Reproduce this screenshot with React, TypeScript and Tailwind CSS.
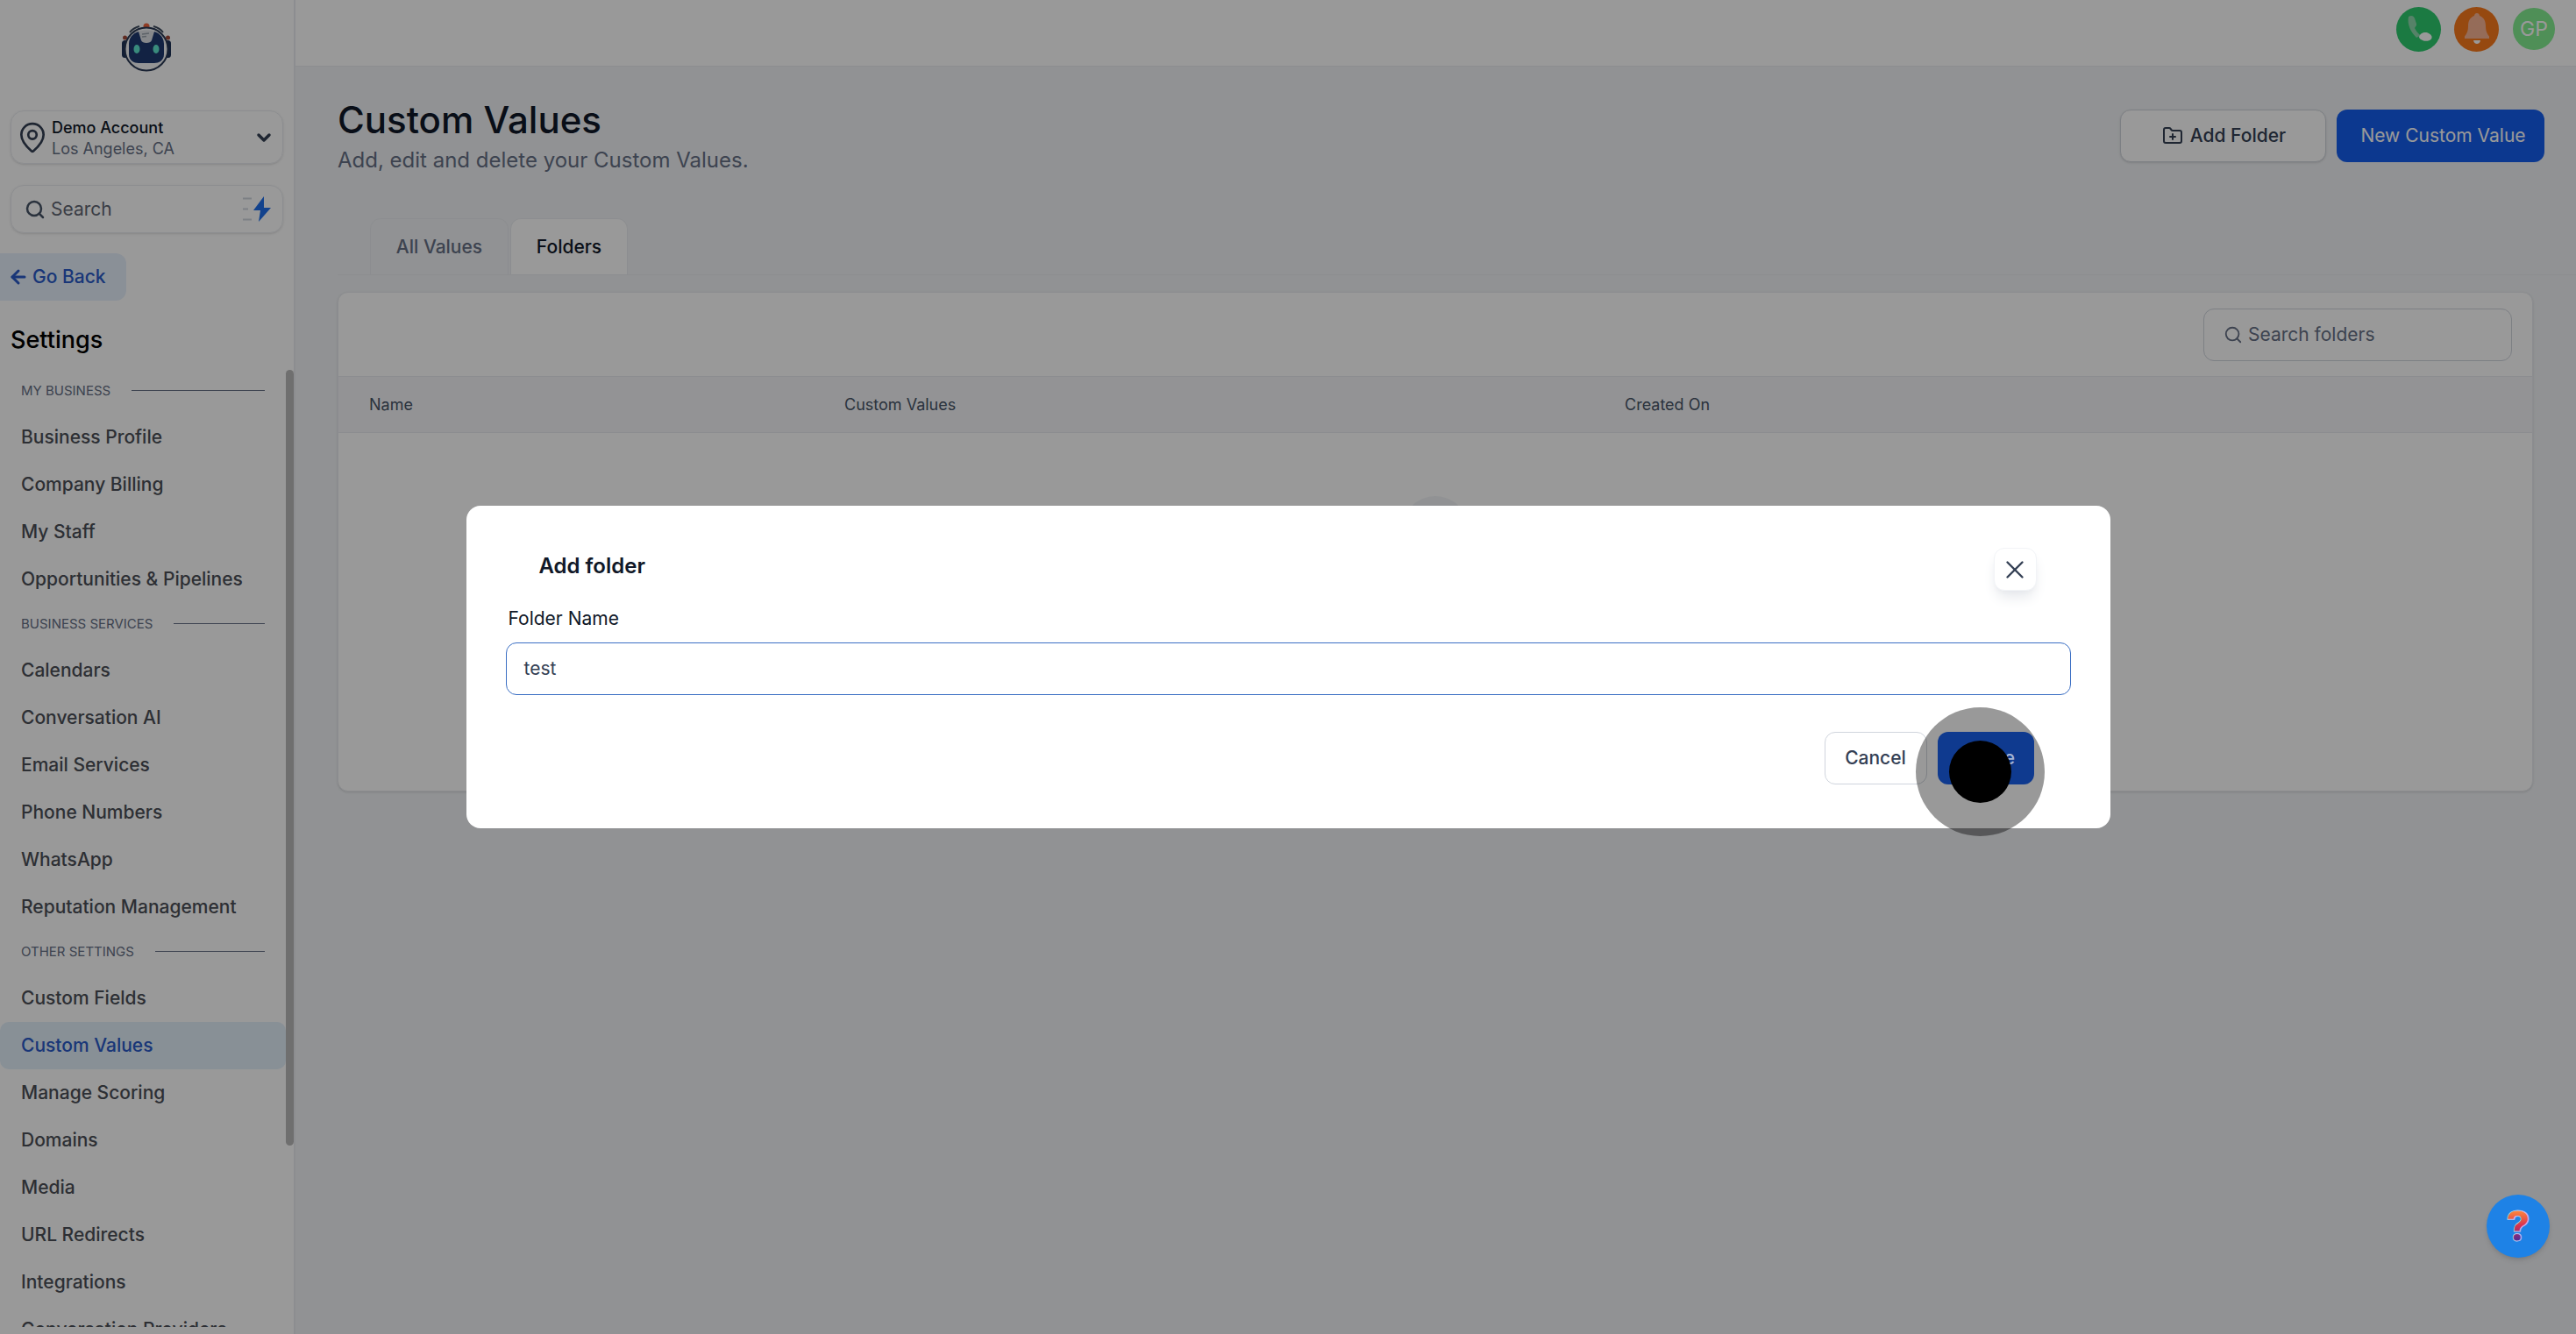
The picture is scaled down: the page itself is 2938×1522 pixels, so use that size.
import { ArrowLeft, ChevronDown, FolderPlus, MapPin, Search, X } from "lucide-react";

const sections = [
  {
    title: "MY BUSINESS",
    items: ["Business Profile", "Company Billing", "My Staff", "Opportunities & Pipelines"],
  },
  {
    title: "BUSINESS SERVICES",
    items: ["Calendars", "Conversation AI", "Email Services", "Phone Numbers", "WhatsApp", "Reputation Management"],
  },
  {
    title: "OTHER SETTINGS",
    items: ["Custom Fields", "Custom Values", "Manage Scoring", "Domains", "Media", "URL Redirects", "Integrations", "Conversation Providers"],
  },
];

function RobotLogo() {
  return (
    <svg width="58" height="56" viewBox="0 0 58 56" fill="none">
      {/* signal arcs */}
      <path d="M10 11 C13 7 17 5 21 4" stroke="#3d4a5e" strokeWidth="2" />
      <path d="M14 14 C16 12 18 11 21 10" stroke="#3d4a5e" strokeWidth="2" />
      <path d="M48 11 C45 7 41 5 37 4" stroke="#3d4a5e" strokeWidth="2" />
      <path d="M44 14 C42 12 40 11 37 10" stroke="#3d4a5e" strokeWidth="2" />
      <circle cx="29" cy="4" r="3.5" fill="#f0643c" />
      <line x1="29" y1="7" x2="29" y2="11" stroke="#3d4a5e" strokeWidth="1.5" />
      <circle cx="4.5" cy="17" r="2.5" fill="#a04a3a" />
      <circle cx="53.5" cy="17" r="2.5" fill="#a04a3a" />
      {/* ear pieces */}
      <rect x="1" y="20" width="7" height="20" rx="3.5" fill="#1e3358" />
      <rect x="50" y="20" width="7" height="20" rx="3.5" fill="#1e3358" />
      {/* head */}
      <circle cx="29" cy="30" r="24.5" fill="#f7f8fa" stroke="#2a3a55" strokeWidth="2" />
      <path d="M9 24 C9 15 17 10 21 10 L24 20 C25 23 33 23 34 20 L37 10 C41 10 49 15 49 24 L49 36 C49 43 43 46 38 46 L20 46 C15 46 9 43 9 36 Z" fill="#1e3a70" />
      <path d="M20 10 C25 8 33 8 38 10 L35 20 C34 24 24 24 23 20 Z" fill="#dfe3e8" />
      <path d="M24 13 L32 12 M24 16 L29 15.5" stroke="#9aa3ad" strokeWidth="1.5" />
      <ellipse cx="18" cy="30" rx="3.5" ry="5" fill="#5fe8cf" />
      <ellipse cx="40" cy="30" rx="3.5" ry="5" fill="#5fe8cf" />
    </svg>
  );
}

function BoltIcon() {
  return (
    <svg width="34" height="30" viewBox="0 0 34 30" fill="none">
      <path d="M1 2.5 H11 M1 14.5 H7 M1 26.5 H11" stroke="#d0d5dd" strokeWidth="2" />
      <path d="M25 0 L13 16 H21 L19 29 L33 13 H25 Z" fill="#1f6feb" />
    </svg>
  );
}

function PhoneGlyph() {
  return (
    <svg width="36" height="36" viewBox="0 0 36 36">
      <path d="M6 4 C9 2 12 3 13 6 L15 12 C15.5 14 14 15.500 13 17 C14.500 20 16.500 23 20 25.500 L15 28 C9 22 4 13 6 4 Z" fill="#8fd9ae" />
      <path d="M18 27 C19 23 24 21 28 22.500 C32 24 33.500 27 32 29.500 C30 32 25 32.500 22 31 C20 30 18 29 18 27 Z" fill="#ffffff" />
    </svg>
  );
}

function BellGlyph() {
  return (
    <svg width="30" height="38" viewBox="0 0 30 38">
      <path d="M15 1 C17 1 18 2.500 18 4 C23 6 25 10 25 16 C25 22 27 25 29 27.500 V30 H1 V27.500 C3 25 5 22 5 16 C5 10 7 6 12 4 C12 2.500 13 1 15 1 Z" fill="#f9b595" />
      <path d="M11 32 H19 C18.500 35 16.500 36 15 36 C13.500 36 11.500 35 11 32 Z" fill="#ffffff" />
    </svg>
  );
}

function SectionLabel({ title }: { title: string }) {
  return (
    <div className="flex h-[50px] items-center gap-6 pb-[3px] pl-6 pr-[24px]">
      <span className="shrink-0 text-[15px] leading-none text-[#667085]">{title}</span>
      <span className="h-px flex-1 bg-[#667085]" />
    </div>
  );
}

function Sidebar() {
  return (
    <aside className="flex h-[1522px] w-[337px] shrink-0 flex-col overflow-hidden border-r-2 border-[#eaecf0] bg-white">
      <div className="flex shrink-0 justify-center pt-[26px] pr-[2px]">
        <RobotLogo />
      </div>

      <div className="mx-3 mt-[44px] flex h-[61px] w-[311px] shrink-0 items-center rounded-[15px] border border-[#eaecf0] pl-[5px] pr-[9px] shadow-sm">
        <MapPin size={38} strokeWidth={1.7} className="shrink-0 text-[#344054]" />
        <div className="ml-[3px] flex-1 pt-[3px]">
          <div className="text-[18px] leading-[24px] font-medium text-[#101828]">Demo Account</div>
          <div className="text-[18px] leading-[24px] text-[#667085]">Los Angeles, CA</div>
        </div>
        <ChevronDown size={24} strokeWidth={3.5} className="text-[#344054]" />
      </div>

      <div className="mx-3 mt-6 flex h-[55px] w-[311px] shrink-0 items-center rounded-[15px] border border-[#eaecf0] pl-[15px] pr-[12px] shadow-sm">
        <Search size={24} strokeWidth={2.5} className="shrink-0 text-[#475467]" />
        <span className="ml-[6px] flex-1 text-[21px] text-[#5f6673]">Search</span>
        <BoltIcon />
      </div>

      <div className="mt-[23px] flex h-[54px] w-[144px] shrink-0 items-center rounded-r-xl bg-[#e6f0fc] pl-[9px] text-[21px] font-medium text-[#2a5bc8]">
        <ArrowLeft size={24} strokeWidth={3} />
        <span className="ml-[4px]">Go Back</span>
      </div>

      <div className="mt-[25px] shrink-0 pl-3 text-[27px] leading-[40px] font-medium text-[#000000]">Settings</div>

      <div className="relative mb-2 mt-[14px] min-h-0 flex-1 overflow-hidden">
        <div className="absolute left-[326px] top-0 h-[885px] w-[9px] rounded-full bg-[#b9b9b9]" />
        <div className="w-[326px]">
          {sections.map((section) => (
            <div key={section.title}>
              <SectionLabel title={section.title} />
              {section.items.map((item) =>
                item === "Custom Values" ? (
                  <div key={item} className="flex h-[54px] items-center rounded-[10px] bg-[#e3f0fb] pl-6 text-[21px] font-medium text-[#2a5bc8]">
                    {item}
                  </div>
                ) : (
                  <div key={item} className="flex h-[54px] items-center pl-6 text-[21px] font-medium text-[#4b4f57]">
                    {item}
                  </div>
                ),
              )}
            </div>
          ))}
        </div>
      </div>
    </aside>
  );
}

function TopBar() {
  return (
    <div className="flex h-[76px] items-center justify-end border-b border-[#eaecf0] bg-white pb-[9px] pr-6">
      <div className="flex h-[51px] w-[51px] items-center justify-center rounded-full bg-[#2dcb6e]">
        <PhoneGlyph />
      </div>
      <div className="ml-[15px] flex h-[51px] w-[51px] items-center justify-center rounded-full bg-[#fb7a1c]">
        <BellGlyph />
      </div>
      <div className="ml-[16px] flex h-[48px] w-[48px] items-center justify-center rounded-full bg-[#84ee91] text-[23px] text-white">
        GP
      </div>
    </div>
  );
}

function FoldersCard() {
  return (
    <div className="ml-[48px] mr-[49px] mt-[19px] h-[570px] rounded-xl border border-[#eaecf0] bg-white shadow-sm">
      <div className="flex h-[95px] items-center justify-end pr-[23px]">
        <div className="flex h-[60px] w-[352px] items-center rounded-xl border border-[#d0d5dd] pl-[22px]">
          <Search size={22} strokeWidth={2} className="text-[#667085]" />
          <span className="ml-[6px] text-[21px] text-[#667085]">Search folders</span>
        </div>
      </div>
      <div className="flex h-[65px] items-center border-y border-[#eaecf0] bg-[#f5f6f8] pl-[35px] text-[18px] text-[#475467]">
        <span className="w-[542px]">Name</span>
        <span className="w-[890px]">Custom Values</span>
        <span>Created On</span>
      </div>
      <div className="flex justify-center pt-[72px]">
        <div className="h-[76px] w-[76px] rounded-full bg-[#f2f4f7]" />
      </div>
    </div>
  );
}

function Page() {
  return (
    <main className="flex-1 bg-[#f2f4f7]">
      <TopBar />
      <div className="flex items-start justify-between pl-[48px] pr-[36px] pt-[34px]">
        <div>
          <h1 className="text-[42px] leading-[54px] font-medium text-[#101828]">Custom Values</h1>
          <p className="text-[24px] leading-[38px] text-[#667085]">Add, edit and delete your Custom Values.</p>
        </div>
        <div className="mt-[15px] flex gap-3">
          <button className="flex h-[60px] w-[235px] items-center justify-center gap-2 rounded-xl border border-[#d0d5dd] bg-white pl-[2px] text-[21px] font-medium text-[#344054] shadow-sm">
            <FolderPlus size={24} strokeWidth={2} />
            Add Folder
          </button>
          <button className="h-[60px] w-[237px] rounded-xl bg-[#155eef] pl-[6px] text-[21px] text-white">
            New Custom Value
          </button>
        </div>
      </div>

      <div className="mt-[47px] ml-[48px] flex border-b border-[#eaecf0] pl-[37px]">
        <div className="flex h-[64px] w-[158px] items-center justify-center rounded-t-xl border border-b-0 border-[#eaecf0] text-[21px] font-medium text-[#667085]">
          All Values
        </div>
        <div className="ml-[2px] flex h-[64px] w-[134px] items-center justify-center rounded-t-xl border border-b-0 border-[#eaecf0] bg-white text-[21px] font-medium text-[#101828]">
          Folders
        </div>
      </div>

      <FoldersCard />
    </main>
  );
}

function AddFolderModal() {
  return (
    <div className="absolute inset-0 flex items-center justify-center bg-black/40">
      <div className="h-[368px] w-[1875px] rounded-2xl bg-white px-[45px] pt-[48px]">
        <div className="flex h-[49px] items-start justify-between pl-[38px] pr-[39px]">
          <h2 className="pt-[1px] text-[24px] leading-[40px] font-semibold text-[#101828]">Add folder</h2>
          <button className="flex h-[49px] w-[49px] items-center justify-center rounded-xl border border-[#f2f4f7] bg-white text-[#344054] shadow-lg shadow-gray-200">
            <X size={34} strokeWidth={1.7} />
          </button>
        </div>
        <label className="mt-[16px] block pl-[3px] text-[21px] leading-[32px] text-[#101828]">Folder Name</label>
        <div className="mt-[11px] flex h-[60px] items-center rounded-xl border-[1.500px] border-[#3b6fc4] pl-[20px] text-[21px] text-[#344054]">
          test
        </div>
        <div className="mt-[42px] flex justify-end gap-3 pr-[42px]">
          <button className="h-[60px] w-[117px] rounded-xl border border-[#d0d5dd] bg-white text-[21px] font-medium text-[#344054]">
            Cancel
          </button>
          <button className="relative z-20 h-[60px] w-[110px] rounded-xl bg-[#0f3a8f] pl-[18px] text-[21px] font-medium text-[#a3b5d6]">
            Save
          </button>
        </div>
      </div>
    </div>
  );
}

export default function App() {
  return (
    <div className="relative flex h-[1522px] w-[2938px] overflow-hidden [font-family:Inter,sans-serif]">
      <Sidebar />
      <Page />
      <AddFolderModal />

      {/* click marker from the recording */}
      <div className="absolute left-[2185px] top-[807px] z-10 h-[147px] w-[147px] rounded-full bg-black/40" />
      <div className="absolute left-[2223px] top-[845px] z-30 h-[71px] w-[71px] rounded-full bg-black" />

      {/* help bubble */}
      <div className="absolute left-[2836px] top-[1363px] flex h-[72px] w-[72px] items-center justify-center rounded-full bg-[#1e82e6] shadow-md">
        <svg width="60" height="60" viewBox="0 0 60 60">
          <defs>
            <linearGradient id="helpMark" x1="0" y1="0" x2="0" y2="1">
              <stop offset="20%" stopColor="#ff8a3c" />
              <stop offset="50%" stopColor="#d8304f" />
              <stop offset="80%" stopColor="#4a2a9a" />
            </linearGradient>
          </defs>
          <text
            x="30"
            y="47"
            textAnchor="middle"
            fontSize="48"
            fontWeight="800"
            fontFamily="Inter, sans-serif"
            fill="url(#helpMark)"
            stroke="#b9c6ee"
            strokeWidth="1"
          >
            ?
          </text>
        </svg>
      </div>
    </div>
  );
}
